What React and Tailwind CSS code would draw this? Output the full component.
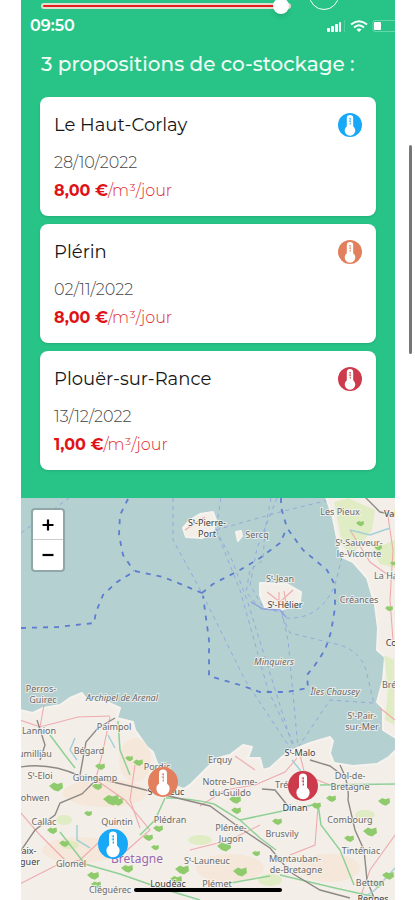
import React from "react";

const BLUE = "#18a8f8";
const ORANGE = "#e2805e";
const RED = "#cc3a4b";

const OFFERS = [
  { id: 1, town: "Le Haut-Corlay", date: "28/10/2022", price: "8,00 €", color: BLUE },
  { id: 2, town: "Plérin", date: "02/11/2022", price: "8,00 €", color: ORANGE },
  { id: 3, town: "Plouër-sur-Rance", date: "13/12/2022", price: "1,00 €", color: RED },
];

const MAP = { x: 21, y: 498, w: 374, h: 402 };

const PINS = [
  { name: "Plérin", x: 163, y: 782, color: ORANGE },
  { name: "Plouër-sur-Rance", x: 303, y: 786, color: RED },
  { name: "Le Haut-Corlay", x: 113, y: 844, color: BLUE },
];

const LABELS = [
  [207, 526, "Sᵗ-Pierre-", "town"], [207, 537, "Port", "town"], [257, 538, "Sercq"],
  [340, 515, "Les Pieux"], [393, 517, "Valo", "town"], [359, 546, "Sᵗ-Sauveur-"], [359, 557, "le-Vicomte"],
  [386, 579, "La Ha"], [280, 582, "Sᵗ-Jean"], [285, 608, "Sᵗ-Hélier", "town"], [359, 603, "Créances"],
  [394, 646, "Cou", "town"], [392, 688, "Bréh"], [274, 665, "Minquiers", "isle"], [335, 695, "Îles Chausey", "isle"],
  [362, 719, "Sᵗ-Pair-"], [362, 730, "sur-Mer"], [41, 692, "Perros-"], [43, 703, "Guirec"],
  [122, 701, "Archipel de Arenal", "isle"], [39, 734, "Lannion"], [114, 730, "Paimpol"], [89, 754, "Bégard"],
  [35, 757, "umilliau"], [157, 770, "Pordic"], [220, 763, "Erquy"], [300, 756, "Sᵗ-Malo", "town"],
  [40, 779, "Sᵗ-Eloi"], [95, 781, "Guingamp"], [166, 795, "Sᵗ-Brieuc", "town"], [230, 785, "Notre-Dame-"],
  [230, 796, "du-Guildo"], [284, 788, "Tréli"], [350, 779, "Dol-de-"], [350, 790, "Bretagne"],
  [34, 801, "lohwen"], [295, 811, "Dinan", "town"], [44, 825, "Callac"], [117, 825, "Quintin"], [170, 823, "Plédran"],
  [231, 831, "Plénée-"], [231, 842, "Jugon"], [282, 837, "Brusvily"], [350, 823, "Combourg"],
  [29, 854, "aix-", "town"], [30, 865, "guer", "town"], [71, 867, "Glomel"], [207, 864, "Sᵗ-Launeuc"],
  [295, 862, "Montauban-"], [296, 873, "de-Bretagne"], [361, 854, "Tinténiac"], [110, 893, "Cléguérec"],
  [168, 887, "Loudéac", "town"], [217, 887, "Plémet"], [370, 886, "Betton"], [373, 902, "Rennes", "town"],
];

const WOODS = [
  [56, 787, 7], [52, 831, 5], [97, 787, 5], [111, 800, 8], [117, 802, 6], [100, 767, 5], [129, 759, 4],
  [138, 763, 5], [88, 814, 4], [158, 829, 5], [148, 838, 5], [93, 876, 6], [96, 885, 5], [127, 869, 6],
  [182, 870, 7], [176, 880, 6], [235, 800, 6], [236, 811, 5], [277, 822, 5], [224, 847, 7], [240, 872, 7],
  [256, 854, 4], [331, 799, 5], [316, 806, 5], [384, 802, 6], [370, 832, 7], [349, 839, 5], [388, 876, 6],
  [377, 884, 6], [393, 564, 3], [378, 548, 4], [360, 524, 4], [389, 609, 4], [64, 844, 5], [155, 848, 4],
];

const FERRIES = [
  "M173 498 V540 L202 593 L245 680 L290 748",
  "M221 498 L216 530 L232 560 L247 600 L294 750",
  "M271 498 L265 530 L263 560 L250 570 L246 592 L260 608 L284 612",
  "M277 498 L257 548 L250 585 L263 607 L282 613 L288 640 L298 748",
  "M216 530 L280 512 L333 499", "M216 530 L240 590 L268 690 L296 749",
  "M286 618 Q320 620 335 585 L343 553", "M282 616 L290 633 L340 645 Q362 652 367 674 L374 704",
  "M373 703 L330 700 L299 746", "M21 533 L69 498",
];

const BORDERS = [
  "M21 628 L58 627 L94 623 L96 612 L103 595 L117 582 L135 571 L163 577 L183 585 L202 593",
  "M128 499 L120 515 L119 535 L123 555 L134 571",
  "M202 593 L213 584 L240 570 L260 558 L280 543 L287 528",
  "M281 498 V507 L287 528 L303 550 L327 570 L335 585 V608 L331 632 L325 650 L315 665 L307 675 L308 688 L287 692 H260 L240 685 L209 676 V640 L203 596",
];

const LAND = [
  "M20 710 L33 713 L43 708 L60 705 L70 698 L82 693 L87 700 L107 702 L120 708 L117 718 L133 722 L135 730 L147 747 L153 752 L157 763 L166 775 L174 786 L184 789 L191 784 L207 768 L218 758 L230 755 L243 745 L252 747 L248 758 L260 758 L263 770 L270 768 L282 757 L290 751 L310 743 L330 737 L333 741 L330 753 L334 763 L353 766 L377 764 L389 757 L396 750 V901 H20 Z",
  "M326 497 L333 518 L337 538 L342 557 L353 562 L367 578 L375 605 L378 628 L377 650 L385 657 L383 680 L377 702 L383 708 V730 L396 738 V497 Z",
  "M260 583 L287 584 L301 592 L300 602 L290 607 L280 610 L265 607 L260 595 Z",
  "M183 528 L190 520 L200 514 L213 512 L216 520 L213 532 L202 538 L186 537 Z",
  "M236 532 L241 531 L242 536 L238 541 Z",
];

const MAIN_ROADS = [
  "M20 767 Q50 762 80 776 L96 778 L130 786 L165 795 L210 806 L240 828 L270 848 L290 872 L320 890 L350 898",
  "M20 852 L35 830 L55 815 L60 803 L82 794 L96 780 M340 765 Q350 785 348 800 L355 830 L364 850 L367 880 L374 898",
  "M262 789 L275 790 L288 806 M310 760 L330 766 L342 775 M365 497 L380 512 L395 515 M37 720 L45 745 L40 760 M80 775 L86 742 L98 728 L115 718",
];
const GREEN_ROADS = [
  "M50 735 L65 755 L75 768 M118 721 L120 750 L130 775 M165 798 L155 820 L140 835 M166 798 Q190 798 214 804",
  "M214 804 L240 820 L260 838 L276 850 M240 820 L278 812 L318 804 L321 825 L340 850 L354 885 M320 785 L395 784",
  "M60 832 L85 864 L120 874 L160 888 L200 900 M280 875 L335 888 L380 898 M225 884 L270 876",
];
const PINK_ROADS = [
  "M20 720 L40 727 L78 717 L110 716 M40 727 L44 705 M110 717 L102 755 L96 778 M96 780 L125 800 L150 830 L125 852",
  "M20 884 L55 866 L80 860 L112 830 M135 765 L130 800 L140 828 M200 806 L225 790 L255 785 L285 772 L297 758",
  "M300 755 L305 775 L330 785 M318 806 L315 845 L290 855 M235 756 L255 770 M20 812 L40 835 L65 860",
  "M395 835 L370 870 L360 898 M387 510 L393 550 L390 600 L393 640 M350 530 L370 562 L395 580 M380 708 L395 720",
  "M267 592 L280 602 L293 590 M279 592 V604 M284 591 L286 603 M185 530 L205 517 M190 850 L230 840 L260 825",
];
const STREAMS = "M75 738 L70 750 L77 760 M77 825 V840 L90 848 M350 530 L370 535 L390 528 M108 735 L115 748 M292 760 L300 770 L307 785 M395 868 L375 890 L360 900";

function Thermometer({ color, className }) {
  return (
    <svg viewBox="0 0 30 30" className={className} aria-hidden="true">
      <circle cx="15" cy="15" r="15" fill={color} />
      <path d="M11 6.500a4 4 0 0 1 8 0v10a6.600 6.600 0 1 1-8 0z" fill="#fff" />
      <path d="M15.300 6.500v8.500" stroke={color} strokeWidth="1.300" strokeDasharray="2 1" fill="none" />
      <path d="M13.500 7h2M13.500 10h2" stroke={color} strokeWidth="0.700" />
    </svg>
  );
}

function StatusBar() {
  return (
    <div className="flex h-6 items-center justify-between pl-[9px] text-white">
      <span className="text-base font-semibold">09:50</span>
      <svg width="69" height="14" viewBox="0 0 69 14" aria-hidden="true">
        <g fill="#fff">
          <rect x="1" y="9" width="3" height="4" rx="1" />
          <rect x="5" y="7" width="3" height="6" rx="1" />
          <rect x="9" y="5" width="3" height="8" rx="1" />
          <rect x="13" y="3" width="2" height="10" rx="1" />
          <rect x="18" y="1" width="1" height="12" opacity=".2" />
        </g>
        <g fill="none" stroke="#fff" strokeWidth="2">
          <path d="M25 5.500Q33 -1 41 5.500" />
          <path d="M28 8.500Q33 4 38 8.500" />
        </g>
        <path d="M30.500 10.500Q33 8.500 35.500 10.500L33 13z" fill="#fff" />
        <path d="M69 1.500H49a2 2 0 0 0-2 2v7a2 2 0 0 0 2 2h20" fill="none" stroke="#fff" opacity=".3" />
        <rect x="48" y="3" width="7" height="8" rx="1" fill="#fff" />
      </svg>
    </div>
  );
}

function OfferCard({ offer }) {
  return (
    <li className="flex h-[119px] items-start justify-between rounded-lg bg-white px-3.5 pt-4 shadow">
      <div>
        <h2 className="text-lg leading-6 text-[#161616]">{offer.town}</h2>
        <p className="mt-3 text-base leading-7 font-light text-[#444]">{offer.date}</p>
        <p className="text-base leading-7 font-light text-[#e02a2e]">
          <strong className="font-bold text-[#df1317]">{offer.price}</strong>/m³/jour
        </p>
      </div>
      <Thermometer color={offer.color} className="size-6" />
    </li>
  );
}

function Paths({ list, ...rest }) {
  return (
    <g fill="none" {...rest}>
      {list.map((d) => (
        <path key={d} d={d} />
      ))}
    </g>
  );
}

function MapDrawing() {
  return (
    <svg viewBox={`${MAP.x} ${MAP.y} ${MAP.w} ${MAP.h}`} className="block size-full">
      <rect x="21" y="498" width="374" height="402" fill="#b5d0d0" />
      <Paths list={FERRIES} stroke="#8fa5dc" strokeWidth="0.9" strokeDasharray="4 4" />
      <g fill="#f3efe8">
        {LAND.map((d) => (
          <path key={d} d={d} stroke="#f6f3ef" strokeWidth="2" strokeLinejoin="round" />
        ))}
      </g>
      <g fill="#f7e3d0" opacity=".6">
        <ellipse cx="80" cy="850" rx="38" ry="13" />
        <ellipse cx="135" cy="760" rx="16" ry="22" />
        <ellipse cx="105" cy="793" rx="42" ry="14" />
        <ellipse cx="230" cy="868" rx="34" ry="14" />
        <ellipse cx="330" cy="868" rx="30" ry="14" />
      </g>
      <g fill="#d8ebb5" opacity=".7">
        <path d="M334 502L348 498L375 510L372 530L352 555L342 545L338 522Z" />
        <path d="M372 550L395 540V568L380 564Z" />
        <path d="M384 655L394 660V725L385 720L388 690Z" />
        <ellipse cx="64" cy="820" rx="8" ry="5" />
        <ellipse cx="70" cy="845" rx="9" ry="4" />
        <ellipse cx="365" cy="815" rx="10" ry="5" />
        <ellipse cx="200" cy="840" rx="12" ry="5" />
        <ellipse cx="270" cy="880" rx="12" ry="6" />
      </g>
      <Paths list={PINK_ROADS} stroke="#efaaae" strokeWidth="1.100" />
      <Paths list={GREEN_ROADS} stroke="#90d097" strokeWidth="1.500" />
      <Paths list={MAIN_ROADS} stroke="#8f8985" strokeWidth="1.400" />
      <path d={STREAMS} fill="none" stroke="#a5cfd8" strokeWidth="1.500" />
      <g fill="#8fcb6c">
        {WOODS.map(([x, y, r]) => (
          <path
            key={`${x}-${y}`}
            d={`M${x - r} ${y - 1}l${r * 0.7} ${-r * 0.5}l${r * 0.5} ${r * 0.2}l${r * 0.7} ${-r * 0.2}l${r * 0.1} ${r * 0.8}l${-r * 0.7} ${r * 0.5}l${-r * 0.6} ${-r * 0.2}z`}
          />
        ))}
      </g>
      <Paths list={BORDERS} stroke="#5c7dd0" strokeWidth="1.800" strokeDasharray="5 6" />
      <path d="M251 602L263 609L280 610L286 617" fill="none" stroke="#8fa5dc" strokeWidth="1.500" />
      <g
        textAnchor="middle"
        fontSize="9"
        fill="#6a6a6a"
        stroke="#f7f5f2"
        strokeOpacity=".75"
        strokeWidth="2"
        paintOrder="stroke"
        className="font-['Noto_Sans','DejaVu_Sans',sans-serif]"
      >
        {LABELS.map(([x, y, text, kind]) => (
          <text
            key={`${text}-${y}`}
            x={x}
            y={y}
            fill={kind === "town" ? "#3f3f3f" : undefined}
            fontStyle={kind === "isle" ? "italic" : undefined}
          >
            {text}
          </text>
        ))}
        <text x="137" y="863" fontSize="12" fill="#9a68ae">
          Bretagne
        </text>
      </g>
    </svg>
  );
}

function OfferMap() {
  return (
    <section className="relative aspect-[374/402] w-full overflow-hidden" aria-label="Carte">
      <MapDrawing />
      {PINS.map((pin) => (
        <button
          key={pin.name}
          type="button"
          aria-label={pin.name}
          className="absolute size-[30px] -translate-x-1/2 -translate-y-1/2"
          style={{
            left: `${((pin.x - MAP.x) / MAP.w) * 100}%`,
            top: `${((pin.y - MAP.y) / MAP.h) * 100}%`,
          }}
        >
          <Thermometer color={pin.color} className="size-full" />
        </button>
      ))}
      <div className="absolute top-2.5 left-2.5 flex w-[34px] flex-col divide-y divide-[#ccc] rounded border-2 border-[#91a6a6] bg-white text-black">
        {[
          ["Zoom avant", "M8 2.500V13.500M2.500 8H13.500"],
          ["Zoom arrière", "M2.500 8H13.500"],
        ].map(([label, d]) => (
          <button key={label} type="button" aria-label={label} className="flex h-[30px] items-center justify-center">
            <svg viewBox="0 0 16 16" className="size-4" aria-hidden="true">
              <path d={d} stroke="currentColor" strokeWidth="2.200" />
            </svg>
          </button>
        ))}
      </div>
      <div className="absolute bottom-2 left-1/2 h-1 w-[148px] -translate-x-1/2 rounded-full bg-black" />
    </section>
  );
}

export default function App() {
  return (
    <div className="relative overflow-hidden bg-white font-['Montserrat','Inter',sans-serif]">
      <main className="mr-5 ml-[21px] flex flex-col">
        <div className="flex flex-col bg-[#28c487] pb-7">
          <div className="-mt-5 flex h-[34px] items-start gap-[18px] pl-5">
            <input
              type="range"
              aria-label="Distance"
              defaultValue="100"
              className="h-4 w-[250px] appearance-none self-end bg-transparent [&::-webkit-slider-runnable-track]:h-1.5 [&::-webkit-slider-runnable-track]:rounded-full [&::-webkit-slider-runnable-track]:border-2 [&::-webkit-slider-runnable-track]:border-[#e5dcd0] [&::-webkit-slider-runnable-track]:bg-[#e0201c] [&::-webkit-slider-thumb]:-mt-[7px] [&::-webkit-slider-thumb]:size-4 [&::-webkit-slider-thumb]:appearance-none [&::-webkit-slider-thumb]:rounded-full [&::-webkit-slider-thumb]:bg-white [&::-webkit-slider-thumb]:shadow-md"
            />
            <button type="button" aria-label="Options" className="size-[30px] rounded-full border border-white" />
          </div>
          <StatusBar />
          <h1 className="mt-3 px-5 text-xl leading-7 font-medium text-[#effcf5]">3 propositions de co-stockage :</h1>
          <ul className="mt-[19px] flex flex-col gap-2 px-[19px]">
            {OFFERS.map((offer) => (
              <OfferCard key={offer.id} offer={offer} />
            ))}
          </ul>
        </div>
        <OfferMap />
      </main>
      <div className="absolute top-[145px] right-[3px] h-[209px] w-[3px] rounded-full bg-[#777]" />
    </div>
  );
}
